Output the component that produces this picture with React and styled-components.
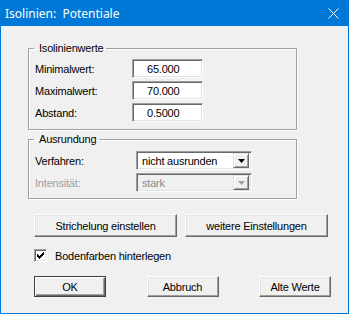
import styled, { createGlobalStyle } from "styled-components";

const GlobalStyle = createGlobalStyle`
  body {
    margin: 0;
    background: #ffffff;
  }
`;

const Window = styled.div`
  width: 349px;
  height: 314px;
  box-sizing: border-box;
  border: 1px solid #0078d7;
  border-top: none;
  background: #f0f0f0;
  display: flex;
  flex-direction: column;
  font-family: "Liberation Sans", Arial, sans-serif;
  font-size: 11px;
  letter-spacing: -0.2px;
  color: #000;
`;

const TitleBar = styled.div`
  height: 26px;
  margin: 0 -1px;
  background: #0078d7;
  display: flex;
  align-items: center;
  justify-content: space-between;
  padding: 0 10px 0 5px;
  color: #fff;
  font-family: "Noto Sans", "Liberation Sans", sans-serif;
  font-size: 12px;
  letter-spacing: 0;
`;

const Title = styled.span`
  white-space: pre;
`;

const Body = styled.div`
  padding: 15px 0 0 27px;
  display: flex;
  flex-direction: column;
`;

const Group = styled.fieldset`
  width: 269px;
  box-sizing: border-box;
  margin: ${(p) => p.$top || 0}px 0 0 0;
  padding: ${(p) => p.$pt}px 6px ${(p) => p.$pb}px 6px;
  border: 1px solid #a0a0a0;
  box-shadow: inset 1px 1px #fff, 1px 1px #fff;
  display: flex;
  flex-direction: column;
  gap: 3px;
`;

const Legend = styled.legend`
  margin-left: -1px;
  padding: 0 3px 0 5px;
  line-height: 14px;
  font-size: 11px;
`;

const Row = styled.div`
  display: grid;
  grid-template-columns: ${(p) => p.$label}px auto;
  align-items: center;
  height: 19px;
`;

const Label = styled.span`
  color: ${(p) => (p.$disabled ? "#a0a0a0" : "#000")};
`;

const Field = styled.div`
  width: 71px;
  height: 19px;
  box-sizing: border-box;
  background: #fff;
  border: 1px solid;
  border-color: #a0a0a0 #fff #fff #a0a0a0;
  box-shadow: inset 1px 1px #696969, inset -1px -1px #e3e3e3;
  padding-left: 14px;
  display: flex;
  align-items: center;
`;

const Combo = styled.div`
  width: 116px;
  height: 19px;
  box-sizing: border-box;
  background: ${(p) => (p.$disabled ? "#f0f0f0" : "#fff")};
  color: ${(p) => (p.$disabled ? "#8a8a8a" : "#000")};
  border: 1px solid;
  border-color: #a0a0a0 #fff #fff #a0a0a0;
  box-shadow: inset 1px 1px #696969, inset -1px -1px #e3e3e3;
  padding: 2px 2px 2px 5px;
  display: flex;
  align-items: center;
  justify-content: space-between;
`;

const DropButton = styled.div`
  width: 16px;
  height: 15px;
  box-sizing: border-box;
  background: #f0f0f0;
  border: 1px solid;
  border-color: #e3e3e3 #696969 #696969 #e3e3e3;
  box-shadow: inset 1px 1px #fff, inset -1px -1px #a0a0a0;
  display: flex;
  align-items: center;
  justify-content: center;
`;

const ButtonRow = styled.div`
  display: flex;
  gap: ${(p) => p.$gap || 0}px;
  justify-content: ${(p) => p.$justify || "flex-start"};
  width: 297px;
  margin: ${(p) => p.$top}px 0 0 6px;
`;

const Button = styled.div`
  width: ${(p) => p.$w}px;
  height: ${(p) => p.$h}px;
  box-sizing: border-box;
  background: #f0f0f0;
  border: 1px solid;
  border-color: ${(p) =>
    p.$default ? "#404040" : "#fff #696969 #696969 #fff"};
  box-shadow: ${(p) =>
    p.$default
      ? "inset 1px 1px #fff, inset -1px -1px #696969, inset -2px -2px #a0a0a0"
      : "inset -1px -1px #a0a0a0, inset 1px 1px #e3e3e3"};
  display: flex;
  align-items: center;
  justify-content: center;
`;

const CheckRow = styled.label`
  display: flex;
  align-items: center;
  gap: 8px;
  margin: 12px 0 0 6px;
  height: 13px;
`;

const CheckBox = styled.div`
  width: 13px;
  height: 13px;
  box-sizing: border-box;
  background: #fff;
  border: 1px solid;
  border-color: #a0a0a0 #fff #fff #a0a0a0;
  box-shadow: inset 1px 1px #696969, inset -1px -1px #e3e3e3;
  display: flex;
  align-items: center;
  justify-content: center;
`;

const Arrow = ({ color }) => (
  <svg width="7" height="4" viewBox="0 0 7 4">
    <path d="M0 0H7L3.5 4Z" fill={color} />
  </svg>
);

export default function App() {
  return (
    <>
      <GlobalStyle />
      <Window>
        <TitleBar>
          <Title>Isolinien:  Potentiale</Title>
          <svg width="11" height="11" viewBox="0 0 11 11">
            <path d="M0.5 0.5L10.5 10.5M10.5 0.5L0.5 10.5" stroke="#fff" strokeWidth="1" />
          </svg>
        </TitleBar>
        <Body>
          <Group $pt={4} $pb={7}>
            <Legend>Isolinienwerte</Legend>
            <Row $label={97}>
              <Label>Minimalwert:</Label>
              <Field>65.000</Field>
            </Row>
            <Row $label={97}>
              <Label>Maximalwert:</Label>
              <Field>70.000</Field>
            </Row>
            <Row $label={97}>
              <Label>Abstand:</Label>
              <Field>0.5000</Field>
            </Row>
          </Group>
          <Group $top={2} $pt={5} $pb={6}>
            <Legend>Ausrundung</Legend>
            <Row $label={101}>
              <Label>Verfahren:</Label>
              <Combo>
                nicht ausrunden
                <DropButton>
                  <Arrow color="#000" />
                </DropButton>
              </Combo>
            </Row>
            <Row $label={101}>
              <Label $disabled>Intensität:</Label>
              <Combo $disabled>
                stark
                <DropButton>
                  <Arrow color="#a0a0a0" />
                </DropButton>
              </Combo>
            </Row>
          </Group>
          <ButtonRow $top={15} $gap={8}>
            <Button $w={143} $h={23}>Strichelung einstellen</Button>
            <Button $w={143} $h={23}>weitere Einstellungen</Button>
          </ButtonRow>
          <CheckRow>
            <CheckBox>
              <svg width="7" height="7" viewBox="0 0 7 7" shapeRendering="crispEdges">
                <path
                  d="M6 0h1v3h-1v1h-1v1h-1v1h-1v1h-1v-1h-1v-1h-1v-3h1v1h1v1h1v-1h1v-1h1z"
                  fill="#000"
                />
              </svg>
            </CheckBox>
            Bodenfarben hinterlegen
          </CheckRow>
          <ButtonRow $top={14} $justify="space-between">
            <Button $w={72} $h={21} $default>OK</Button>
            <Button $w={72} $h={21}>Abbruch</Button>
            <Button $w={72} $h={21}>Alte Werte</Button>
          </ButtonRow>
        </Body>
      </Window>
    </>
  );
}
